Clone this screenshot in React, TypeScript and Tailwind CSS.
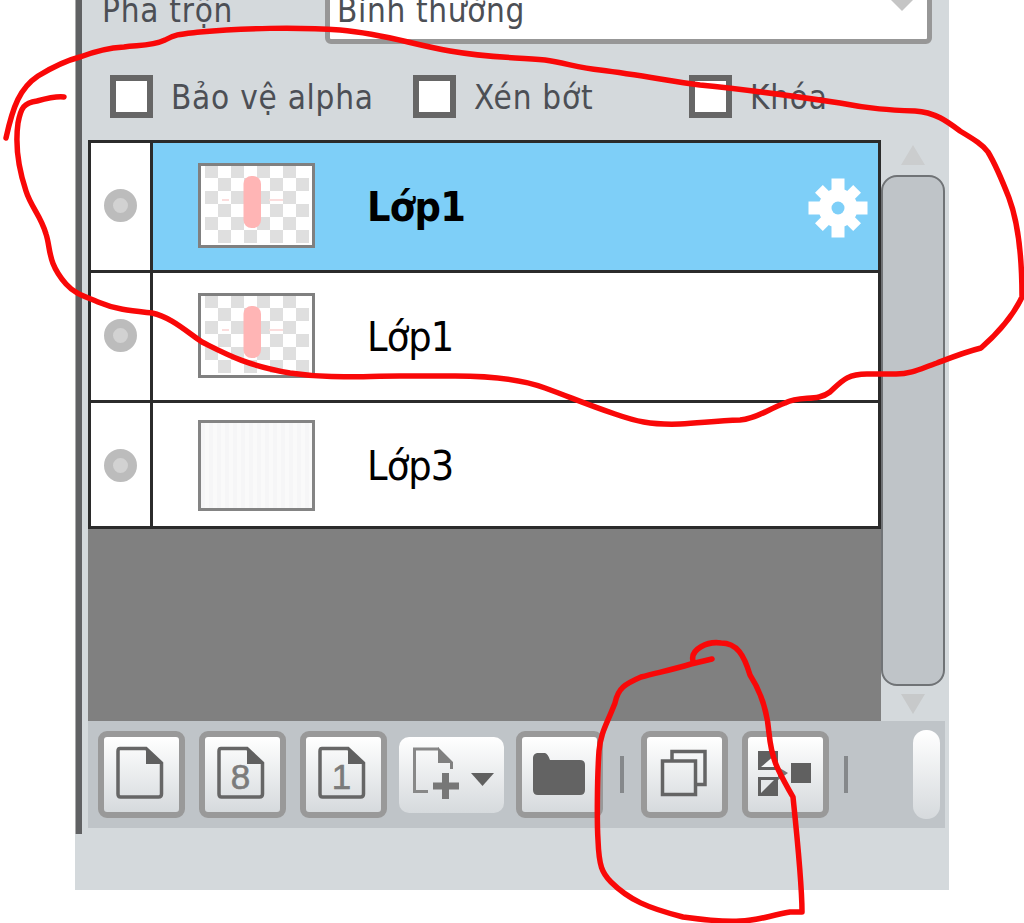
import type { ReactNode } from "react";

const FONT = "font-['DejaVu_Sans_Condensed','DejaVu_Sans',sans-serif] [font-stretch:condensed]";

function Check({ label, box }: { label: string; box: string }) {
  return (
    <label className={`flex items-center ${box}`}>
      <span className="h-[43px] w-[43px] shrink-0 border-[6px] border-[#666] bg-white" />
      <span className="mt-[2px] ml-[18px] whitespace-nowrap leading-[43px] tracking-[0.75px]">{label}</span>
    </label>
  );
}

function Thumb({ blank }: { blank?: boolean }) {
  if (blank) {
    return <div className="mt-[1px] h-[91px] w-[117px] border-[3px] border-[#848484] bg-[repeating-linear-gradient(90deg,#f6f6f7_0_4px,#fafafa_4px_8px)]" />;
  }
  const cells: ReactNode[] = [];
  for (let r = 0; r < 6; r++) {
    for (let c = 0; c < 4; c++) {
      const x = 7 + c * 26 + (r % 2) * 13;
      cells.push(<rect key={`${r}-${c}`} x={x} y={2 + r * 13} width="13" height="13" fill="#dfdfdf" />);
    }
  }
  return (
    <svg className="mb-[2px]" width="117" height="85" viewBox="0 0 117 85">
      <rect width="117" height="85" fill="#fff" />
      {cells}
      <path d="M24 37h7M71 37h14" stroke="#fbdcdc" strokeWidth="2" />
      <rect x="45.500" y="13" width="17.500" height="52" rx="8" fill="#ffb5b5" />
      <rect x="1.500" y="1.500" width="114" height="82" fill="none" stroke="#808080" strokeWidth="3" />
    </svg>
  );
}

function Gear() {
  return (
    <svg width="60" height="60" viewBox="-30 -30 60 60">
      <g fill="#fff">
        <circle r="19.500" />
        <path d="M-6.500-29.500h13v59h-13zM-29.500-6.500h59v13h-59z" />
        <path d="M-5.500-27h11v54h-11zM-27-5.500h54v11h-54z" transform="rotate(45)" />
      </g>
      <circle r="6.500" fill="#7ecff8" />
    </svg>
  );
}

function Layer({ name, active, blank, row }: { name: string; active?: boolean; blank?: boolean; row: string }) {
  return (
    <div className={`flex border-b-[3px] border-[#2b2b2b] ${row}`}>
      <div className="flex w-[62px] items-center border-r-[3px] border-[#2b2b2b] bg-white pl-[13px]">
        <span className={`h-[33px] w-[33px] rounded-full border-[9px] border-[#bcbcbc] bg-[#d2d2d2] ${blank ? "mt-[1px]" : "mb-[2px]"}`} />
      </div>
      <div className={`flex flex-1 items-center pl-[45px] ${active ? "bg-[#7ecff8]" : "bg-white"}`}>
        <Thumb blank={blank} />
        <span className={`ml-[52px] flex-1 text-[41px] leading-[48px] text-black ${blank ? "mt-[3px]" : ""} ${active ? "font-bold tracking-[-0.7px]" : "tracking-[-0.9px]"}`}>{name}</span>
        {active && <div className="mt-[3px] mr-[10px]"><Gear /></div>}
      </div>
    </div>
  );
}

function ToolButton({ children }: { children?: ReactNode }) {
  return (
    <button className="flex h-[87px] w-[87px] shrink-0 items-center justify-center rounded-[9px] border-[6px] border-[#999] bg-linear-to-b from-white to-[#d6dadd]">
      {children}
    </button>
  );
}

function Page({ digit }: { digit?: string }) {
  return (
    <svg width="75" height="75" viewBox="0 0 75 75">
      <path d="M16 11.500H42L57.500 26V57Q57.500 60 54.500 60H16.500Q14 60 14 57V14Q14 11.500 16 11.500Z" fill="none" stroke="#666" strokeWidth="3.500" />
      <path d="M42 10L59 26V27H42Z" fill="#606060" />
      {digit && <text x="35.500" y="52" textAnchor="middle" fontSize="35" fontFamily="Liberation Sans, sans-serif" fill="#7b7b7b" stroke="#7b7b7b" strokeWidth=".6">{digit}</text>}
    </svg>
  );
}

export default function App() {
  return (
    <div className={`relative h-[923px] w-[1024px] overflow-hidden bg-white pl-[75px] text-[#4c4f55] ${FONT}`}>
      <div className="flex h-[890px] w-[874px] bg-[#d4d9dc]">
        <div className="h-[834px] w-[7px] shrink-0 border-l border-[#aaa] bg-[#606163]" />
        <div className="ml-[6px] flex w-[857px] flex-col">
          <div className="flex h-[44px] shrink-0 pl-[14px] text-[33px]">
            <span className="mt-[-8px] w-[223px] whitespace-nowrap leading-[38px] tracking-[0.75px]">Pha trộn</span>
            <div className="mt-[-20px] flex h-[64px] w-[607px] justify-between rounded-[6px] border-[5px] border-[#979797] bg-white pl-[7px]">
              <span className="mt-[7px] leading-[38px] tracking-[0.65px]">Bình thường</span>
              <svg className="mt-[12px] mr-[11px]" width="28" height="15" viewBox="0 0 28 15"><path d="M0 0H28L14 14Z" fill="#c5c5c5" /></svg>
            </div>
          </div>
          <div className="flex h-[96px] shrink-0 items-start pt-[30px] pl-[22px] text-[33px]">
            <Check label="Bảo vệ alpha" box="w-[303px]" />
            <Check label="Xén bớt" box="w-[276px]" />
            <Check label="Khóa" box="" />
          </div>
          <div className="flex h-[581px] shrink-0">
            <div className="w-[793px] bg-[#808080]">
              <div className="border-x-[3px] border-t-[3px] border-[#2b2b2b]">
                <Layer name="Lớp1" active row="h-[130px]" />
                <Layer name="Lớp1" row="h-[130px]" />
                <Layer name="Lớp3" blank row="h-[126px]" />
              </div>
            </div>
            <div className="flex w-[64px] flex-col items-center">
              <svg className="mt-[5px]" width="24" height="21" viewBox="0 0 24 21"><path d="M12 0L24 20H0Z" fill="#cbcdce" /></svg>
              <div className="mt-[9px] h-[511px] w-[64px] rounded-[16px] border-2 border-[#707376] bg-[#bfc4c8]" />
              <svg className="mt-[8px]" width="24" height="21" viewBox="0 0 24 21"><path d="M0 0H24L12 20Z" fill="#c7c9ca" /></svg>
            </div>
          </div>
          <div className="flex h-[107px] shrink-0 items-start bg-[#bfc4c8] pt-[10px] pl-[10px]">
            <div className="flex gap-[14px]">
              <ToolButton><Page /></ToolButton>
              <ToolButton><Page digit="8" /></ToolButton>
              <ToolButton><Page digit="1" /></ToolButton>
            </div>
            <button className="mt-[6px] ml-[12px] h-[76px] w-[105px] rounded-[10px] bg-linear-to-b from-white to-[#d6dadd]">
              <svg width="105" height="76" viewBox="0 0 105 76">
                <path d="M29 54.500H15.500V12H40" fill="none" stroke="#888" strokeWidth="3" />
                <path d="M39 10L54 25V32H51V26H39Z" fill="#808080" />
                <path d="M46.500 36V62M34 49H60" stroke="#777" strokeWidth="7" />
                <path d="M72 36H95L83.500 49Z" fill="#606060" />
              </svg>
            </button>
            <div className="ml-[12px]">
              <ToolButton>
                <svg width="75" height="75" viewBox="0 0 75 75"><path d="M11 21Q11 17 15 16H23Q26 17 28 23H58Q63 23 63 28V53Q63 58 58 58H16Q11 58 11 53Z" fill="#636363" /></svg>
              </ToolButton>
            </div>
            <span className="mt-[25px] ml-[17px] h-[37px] w-[4px] bg-[#85888b]" />
            <div className="ml-[17px] flex gap-[14px]">
              <ToolButton>
                <svg width="75" height="75" viewBox="0 0 75 75" fill="none" stroke="#646464" strokeWidth="3.500">
                  <path d="M25 23V14.500H58V47.500H49" />
                  <rect x="15.500" y="24" width="33" height="33.500" />
                </svg>
              </ToolButton>
              <ToolButton>
                <svg width="75" height="75" viewBox="0 0 75 75">
                  <path d="M10 14H30V33H10Z" fill="#606060" />
                  <path d="M13 30L27 18V30Z" fill="#f4f5f6" />
                  <path d="M10 40H30V59H10Z" fill="#606060" />
                  <path d="M13 56V43H26Z" fill="#e4e7e9" />
                  <path d="M30 30L40 36L30 43Z" fill="#777" />
                  <rect x="43" y="26" width="20" height="20" fill="#606060" />
                </svg>
              </ToolButton>
            </div>
            <span className="mt-[25px] ml-[15px] h-[37px] w-[4px] bg-[#85888b]" />
            <span className="mt-[-1px] ml-[65px] h-[89px] w-[27px] rounded-[13px] bg-linear-to-b from-white to-[#d6dadd]" />
          </div>
        </div>
      </div>
      <svg className="absolute top-0 left-0" width="1024" height="923" viewBox="0 0 1024 923" fill="none" stroke="#f90808" strokeWidth="5.500" strokeLinecap="round" strokeLinejoin="round">
        <path d="M6 138C13 106 20 88 38 76C56 65 68 60 80 57C93 52 107 48 124 47C140 45 152 46 165 40C175 34 182 34 200 32C240 28 300 27 340 30C385 34 410 44 450 51C490 58 512 57 545 60C565 63 580 68 600 70C640 75 670 81 700 85C760 91 800 97 840 103C870 109 890 110 915 111C935 112 948 122 960 131C975 140 983 145 988 152C997 167 1002 180 1009 198C1018 222 1022 252 1022 297C1013 316 998 333 981 348C965 352 950 358 937 363C922 368 912 374 896 374H867C847 374 842 381 830 392C817 402 801 395 785 403C767 410 755 419 740 420C715 421 700 423 680 424C650 425 635 421 615 414C585 404 570 397 545 388C518 378 480 376 455 376H400C360 376 330 379 290 373C245 365 226 354 202 342C187 332 171 317 152 313C133 311 117 310 98 302C84 296 75 294 66 284C47 262 51 249 46 234C41 216 31 207 26 191C18 167 15 145 18 123C21 107 24 103 37 101C48 98 56 96 64 97" />
        <path d="M712 659L691 664C671 670 660 672 641 677C625 684 618 688 615 703C606 726 601 732 599 751C597 780 597 825 598 840C599 866 602 873 611 882C629 900 648 908 683 917C705 920 725 922 740 921C756 921 768 916 790 912L802 912C802 889 798 845 793 797C780 774 772 763 769 733C767 709 761 692 750 675C744 655 737 643 721 643C708 641 690 649 693 661" />
      </svg>
    </div>
  );
}
